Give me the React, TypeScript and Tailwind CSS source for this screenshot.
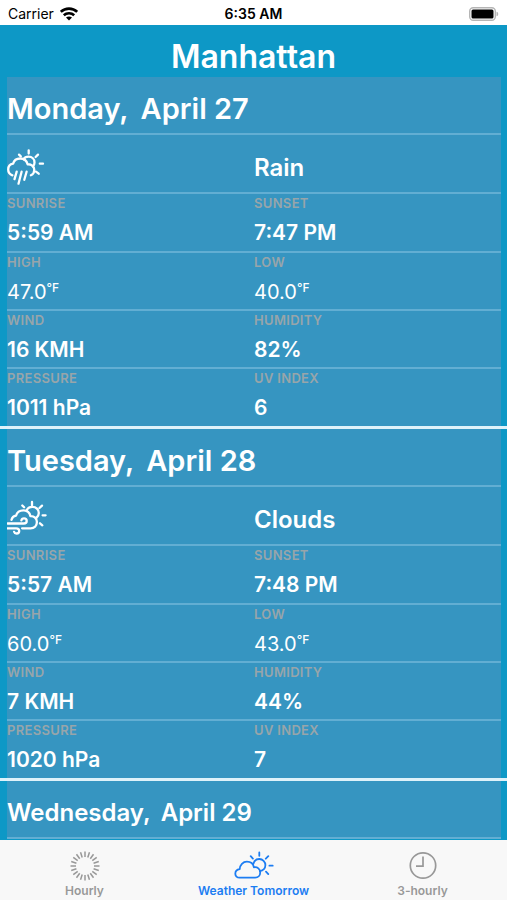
import { ReactNode, useState } from 'react';
import clsx from 'clsx';

interface DayForecast {
  weekday: string;
  date: string;
  icon: ReactNode;
  summary: string;
  sunrise: string;
  sunset: string;
  high: string;
  low: string;
  wind: string;
  humidity: string;
  pressure: string;
  uvIndex: string;
}

const RainIcon = () => (
  <svg width="40" height="38" viewBox="0 0 40 38" fill="none" stroke="currentColor" strokeWidth="2.300" strokeLinecap="round" strokeLinejoin="round" aria-hidden="true">
    <path d="M5.4 27.4C2.6 26.4 1.200 24.2 1.200 21.6c0-3.2 1.800-5.400 4.900-5.900C6.900 12.500 9.900 10.500 13.300 10.500c3.600 0 6.400 2.200 7.300 5.800 3.700-.3 6.700 2.100 6.700 5.700 0 2.500-1.200 4.300-3.400 5.200" />
    <path d="M16.600 11.300C17.500 9.600 19.400 8.700 21.500 8.700c3.500 0 6 2.500 6 5.700 0 1.800-.6 3.200-1.700 4.100" />
    <path d="M21.700 2.300v3.200M31 6.600l-2.400 2.400M32.800 15.700H36M29 23.700l2.700 2M12 6.600l1.800 1.800" />
    <path d="M9.700 23.700l-2.200 7.400M14.600 23.700l-3.100 12M19.600 23.700l-2.300 8" />
  </svg>
);

const WindIcon = () => (
  <svg width="40" height="38" viewBox="0 0 40 38" fill="none" stroke="currentColor" strokeWidth="2.300" strokeLinecap="round" strokeLinejoin="round" aria-hidden="true">
    <path d="M4.500 19.800c.6-2.200 2-3.700 4.500-4.100 1-3.400 3.900-5.300 7.400-5.300 3.600 0 6.300 2.200 7 5.700 3.700-.3 6.500 2.400 6.500 6 0 3.700-2.700 6.200-6.300 6.200h-8.500" />
    <path d="M19.500 11c.7-2.600 3-4.200 5.900-4.200 3.700 0 6.400 2.700 6.400 6.200 0 2.100-.9 3.800-2.500 5" />
    <path d="M25 2v3.300M35 5.600l-2.500 2.400M35.600 15.300h3M33 23.300l2.300 2M15.300 5.500l1.800 1.800" />
    <path d="M.500 23.500h16.200c1.800 0 3-1.100 3-2.600s-1.200-2.500-2.700-2.500c-1.400 0-2.400.7-2.600 2" />
    <path d="M.500 28.300h8.800c1.700 0 2.900 1.100 2.900 2.700 0 1.500-1.100 2.500-2.600 2.500-1.300 0-2.200-.6-2.500-1.700" />
  </svg>
);

const HourlyIcon = () => (
  <svg width="32" height="32" viewBox="0 0 32 32" stroke="currentColor" strokeWidth="1.500" aria-hidden="true">
    {Array.from({ length: 20 }, (_, i) => (
      <line key={i} x1="16" y1="1.500" x2="16" y2="7" transform={`rotate(${i * 18} 16 16)`} />
    ))}
  </svg>
);

const PartlySunnyIcon = () => (
  <svg width="40" height="32" viewBox="0 0 40 32" fill="none" stroke="currentColor" strokeWidth="1.800" strokeLinecap="round" strokeLinejoin="round" aria-hidden="true">
    <path d="M5.500 27.700C3 27.700 1.300 26 1.300 23.700c0-2.400 1.700-4.300 4.400-4.600.2-4.300 3.300-7.400 7.200-7.400 3.700 0 6.400 2.300 7 5.600 3.600-.6 6.300 1.800 6.300 5.100 0 3.100-2.100 5.300-5 5.300z" />
    <path d="M19.400 13.800c.7-2.800 3-4.800 5.900-4.800 3.400 0 6.100 2.700 6.100 6.100 0 3.200-2.300 5.700-5.400 6" />
    <path d="M25.300 2.500v3.300M34.300 6.200l-2.500 2.500M35.400 15.700h3.300M32 21.700l2.300 2.400M16.700 6.200l2.200 2.400" />
  </svg>
);

const ClockIcon = () => (
  <svg width="32" height="32" viewBox="0 0 32 32" fill="none" stroke="currentColor" strokeWidth="1.700" aria-hidden="true">
    <circle cx="16" cy="15.500" r="12.700" />
    <path d="M16 6.500v9.700H9" />
  </svg>
);

const days: DayForecast[] = [
  {
    weekday: 'Monday,',
    date: 'April 27',
    icon: <RainIcon />,
    summary: 'Rain',
    sunrise: '5:59 AM',
    sunset: '7:47 PM',
    high: '47.0',
    low: '40.0',
    wind: '16 KMH',
    humidity: '82%',
    pressure: '1011 hPa',
    uvIndex: '6',
  },
  {
    weekday: 'Tuesday,',
    date: 'April 28',
    icon: <WindIcon />,
    summary: 'Clouds',
    sunrise: '5:57 AM',
    sunset: '7:48 PM',
    high: '60.0',
    low: '43.0',
    wind: '7 KMH',
    humidity: '44%',
    pressure: '1020 hPa',
    uvIndex: '7',
  },
];

const tabs = [
  { id: 'hourly', label: 'Hourly', icon: <HourlyIcon /> },
  { id: 'tomorrow', label: 'Weather Tomorrow', icon: <PartlySunnyIcon /> },
  { id: 'three', label: '3-hourly', icon: <ClockIcon /> },
];

const StatusBar = () => (
  <div className="grid h-[25px] shrink-0 grid-cols-3 items-center bg-white px-2 pt-0.5 text-black">
    <div className="flex items-center gap-1.5 text-sm">
      <span>Carrier</span>
      <svg width="18" height="14" viewBox="0 0 18 14" fill="none" stroke="currentColor" strokeWidth="2.600" aria-label="Wi-Fi">
        <path d="M.800 4.900C5.300.500 12.700.500 17.200 4.900M3.800 8.200c2.900-2.700 7.500-2.700 10.400 0" />
        <path d="M9 13.500L6 10.500c1.700-1.500 4.300-1.500 6 0z" fill="currentColor" stroke="none" />
      </svg>
    </div>
    <span className="text-center text-sm font-semibold">6:35 AM</span>
    <svg className="justify-self-end" width="30" height="14" viewBox="0 0 30 14" aria-label="Battery full">
      <rect x="0.700" y="0.700" width="25.600" height="12.600" rx="3.500" fill="#fff" stroke="#b5b5b5" strokeWidth="1.400" />
      <rect x="2.500" y="2.500" width="22" height="9" rx="1.500" fill="#000" />
      <path d="M27.500 4.700c2.300.5 2.300 4.100 0 4.600z" fill="#b5b5b5" />
    </svg>
  </div>
);

const Degrees = ({ value }: { value: string }) => (
  <span className="flex items-start text-xl leading-7 font-normal">
    {value}
    <span className="text-xs leading-5 font-medium">°F</span>
  </span>
);

const Reading = ({ label, children }: { label: string; children: ReactNode }) => (
  <div>
    <dt className="pt-px text-[13px] leading-4 font-semibold tracking-wide text-[#98a5aa]">{label}</dt>
    <dd className="pt-2 text-[21px] leading-7 font-semibold">{children}</dd>
  </div>
);

interface DateHeadingProps {
  weekday: string;
  date: string;
  compact?: boolean;
}

const DateHeading = ({ weekday, date, compact }: DateHeadingProps) => (
  <h2
    className={clsx(
      'flex h-[58px] items-center border-b-2 border-[#62aed3] pt-2 font-semibold',
      compact ? 'gap-2.5 text-2xl' : 'gap-3 text-[29px]'
    )}
  >
    <span>{weekday}</span>
    <span>{date}</span>
  </h2>
);

const rowClass = 'grid grid-cols-2 border-b-2 border-[#62aed3]';

const DayCard = ({ day }: { day: DayForecast }) => (
  <section className="border-b-[3px] border-[#def2fa]">
    <div className="mr-1.5 ml-[7px] bg-[#3695c1]">
      <DateHeading weekday={day.weekday} date={day.date} />
      <div className={clsx(rowClass, 'h-[59px] items-center pt-1.5')}>
        {day.icon}
        <p className="pt-0.5 text-2xl font-semibold">{day.summary}</p>
      </div>
      <dl>
        <div className={clsx(rowClass, 'h-[59px]')}>
          <Reading label="SUNRISE">{day.sunrise}</Reading>
          <Reading label="SUNSET">{day.sunset}</Reading>
        </div>
        <div className={clsx(rowClass, 'h-[58px]')}>
          <Reading label="HIGH"><Degrees value={day.high} /></Reading>
          <Reading label="LOW"><Degrees value={day.low} /></Reading>
        </div>
        <div className={clsx(rowClass, 'h-[58px]')}>
          <Reading label="WIND">{day.wind}</Reading>
          <Reading label="HUMIDITY">{day.humidity}</Reading>
        </div>
        <div className="grid h-[57px] grid-cols-2">
          <Reading label="PRESSURE">{day.pressure}</Reading>
          <Reading label="UV INDEX">{day.uvIndex}</Reading>
        </div>
      </dl>
    </div>
  </section>
);

const App = () => {
  const [activeTab, setActiveTab] = useState('tomorrow');

  return (
    <div className="flex h-screen flex-col bg-[#0d98c6] font-['Inter',sans-serif] text-white">
      <StatusBar />
      <h1 className="flex h-[52px] shrink-0 items-center justify-center pt-3 text-[32px] font-semibold">Manhattan</h1>

      <main className="min-h-0 flex-1 overflow-y-auto [scrollbar-width:none]">
        {days.map((day) => (
          <DayCard key={day.weekday} day={day} />
        ))}
        <section className="mr-1.5 ml-[7px] bg-[#3695c1]">
          <DateHeading weekday="Wednesday," date="April 29" compact />
        </section>
      </main>

      <nav className="grid h-[60px] shrink-0 grid-cols-3 bg-[#f8f8f8]">
        {tabs.map((tab) => (
          <button
            key={tab.id}
            type="button"
            onClick={() => setActiveTab(tab.id)}
            className={clsx(
              'flex flex-col items-center pt-2.5 text-xs leading-[18px] font-semibold',
              activeTab === tab.id ? 'text-[#1c7df2]' : 'text-[#989898]'
            )}
          >
            {tab.icon}
            <span>{tab.label}</span>
          </button>
        ))}
      </nav>
    </div>
  );
};

export default App;
